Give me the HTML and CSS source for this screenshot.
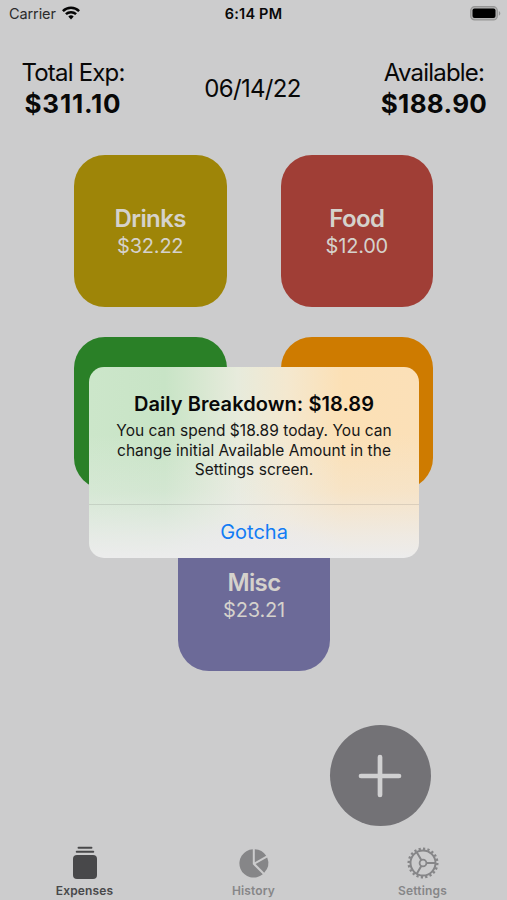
FILE: index.html
```html
<!DOCTYPE html>
<html lang="en">
<head>
<meta charset="utf-8">
<title>Expenses</title>
<link rel="stylesheet" href="styles.css">
</head>
<body>
<div class="screen">
  <header class="status">
    <div class="carrier"><span>Carrier</span>
      <svg class="wifi" width="18" height="14" viewBox="0 0 18 14" fill="none" stroke="#050505" stroke-width="2.5"><path d="M.9 5.1a11.6 11.6 0 0 1 16.2 0M3.9 8.2a7.4 7.4 0 0 1 10.2 0"/><path d="M9 13.4 6.3 10.6a4 4 0 0 1 5.4 0z" fill="#050505" stroke="none"/></svg>
    </div>
    <div class="time">6:14 PM</div>
    <svg class="battery" width="31" height="15" viewBox="0 0 31 15"><rect x=".7" y=".7" width="26.6" height="13.2" rx="4" fill="#b4b4b4" stroke="#959595" stroke-width="1.2"/><rect x="2.5" y="2.6" width="23" height="9.4" rx="2" fill="#000"/><path d="M28.8 5c2 .9 2 3.900 0 4.800z" fill="#959595"/></svg>
  </header>
  <section class="summary">
    <div class="total"><p class="label label-exp">Total Exp:</p><p class="amount amount-exp">$311.10</p></div>
    <div class="date">06/14/22</div>
    <div class="total"><p class="label label-avail">Available:</p><p class="amount">$188.90</p></div>
  </section>
  <main class="tiles">
    <div class="row">
      <div class="tile drinks"><h2>Drinks</h2><p>$32.22</p></div>
      <div class="tile food"><h2>Food</h2><p>$12.00</p></div>
    </div>
    <div class="row"><div class="tile green"></div><div class="tile orange"></div></div>
    <div class="row"><div class="tile misc"><h2>Misc</h2><p>$23.21</p></div></div>
  </main>
  <div class="actions">
    <button class="add" aria-label="Add expense"><svg width="44" height="44" viewBox="0 0 44 44" stroke="#d0d0d1" stroke-width="4.700" stroke-linecap="round"><path d="M22 3v38M3 22h38"/></svg></button>
  </div>
  <nav class="tabs">
    <div class="tab active">
      <svg width="34" height="34" viewBox="0 0 34 34" fill="currentColor"><rect x="5" y="9" width="24" height="24" rx="4"/><path d="M10.500 1.700h13M8.700 5.800h16.600" fill="none" stroke="currentColor" stroke-width="1.900" stroke-linecap="round"/></svg>
      <span>Expenses</span>
    </div>
    <div class="tab">
      <svg width="34" height="34" viewBox="0 0 34 34" fill="currentColor"><path d="M15.800 3.200V18.300L25.800 28.200A14.200 14.200 0 1 1 15.800 3.200z"/><path d="M17.800 3.200a14.200 14.200 0 0 1 11.400 6.600L17.800 16.200z"/><path d="M30.200 11.600a14.200 14.200 0 0 1-3 15.200L18.600 18z"/></svg>
      <span>History</span>
    </div>
    <div class="tab">
      <svg width="34" height="34" viewBox="0 0 34 34" fill="none" stroke="currentColor"><circle cx="17" cy="17" r="12.500" stroke-width="2"/><circle cx="17" cy="17" r="14.300" stroke-width="2.400" pathLength="80" stroke-dasharray="2 2"/><circle cx="17" cy="17" r="3.400" stroke-width="1.800"/><path d="M20.400 17h9.100M15.300 14.050 10.750 6.200M15.300 19.950 10.750 27.800" stroke-width="2"/></svg>
      <span>Settings</span>
    </div>
  </nav>
  <div class="alert" role="alertdialog">
    <div class="message">
      <h1>Daily Breakdown: $18.89</h1>
      <p><span class="line">You can spend $18.89 today. You can</span> <span class="line">change initial Available Amount in the</span> <span class="line">Settings screen.</span></p>
    </div>
    <button class="confirm">Gotcha</button>
  </div>
</div>
</body>
</html>
```

FILE: styles.css
```css
* { box-sizing: border-box; }
body { margin: 0; background: #cccccd; font-family: Inter, "Liberation Sans", sans-serif; color: #080808; }
h1, h2, p { margin: 0; }
button { border: 0; padding: 0; font: inherit; }
.screen { position: relative; width: 507px; height: 900px; overflow: hidden; display: flex; flex-direction: column; }
.status { height: 28px; display: grid; grid-template-columns: 1fr auto 1fr; align-items: center; padding: 0 6px 2px 9px; }
.carrier { display: flex; align-items: center; gap: 6px; font-size: 14.5px; letter-spacing: -.1px; color: #2b2b2b; }
.wifi { margin-top: -1px; }
.time { font-size: 14.5px; font-weight: 600; letter-spacing: .2px; margin-left: -3px; }
.battery { justify-self: end; margin-top: 1px; }
.summary { height: 126px; padding: 29px 19px 0 20px; display: grid; grid-template-columns: 106px 1fr 108px; text-align: center; white-space: nowrap; }
.label { font-size: 24px; line-height: 31px; letter-spacing: -.8px; }
.amount { font-size: 26px; line-height: 31px; font-weight: 700; letter-spacing: .3px; }
.amount-exp { letter-spacing: .8px; }
.date { font-size: 24px; line-height: 63px; letter-spacing: -.7px; margin-left: -1px; }
.tiles { display: flex; flex-direction: column; gap: 29.5px; padding-top: .5px; }
.row { display: flex; justify-content: center; gap: 54px; }
.tile { width: 152.600px; height: 152.600px; border-radius: 31px; padding-top: 49px; text-align: center; color: #d5d2cc; }
.tile h2 { font-size: 24px; line-height: 30px; font-weight: 600; letter-spacing: -.6px; }
.tile p { font-size: 20px; line-height: 25px; letter-spacing: -.2px; }
.drinks { background: #9e8508; }
.food { background: #a03e36; }
.green { background: #2a8027; }
.orange { background: #ce7b00; }
.misc { background: #6c6a98; margin-left: 1px; }
.actions { display: flex; justify-content: flex-end; padding: 53.600px 76px 0 0; }
.add { width: 101.500px; height: 101.500px; border-radius: 50%; background: #737276; display: flex; align-items: center; justify-content: center; }
.tabs { margin-top: auto; height: 54px; display: grid; grid-template-columns: repeat(3, 1fr); }
.tab { display: flex; flex-direction: column; align-items: center; color: #868688; font-size: 12px; font-weight: 600; line-height: 15px; letter-spacing: .15px; }
.tab span { margin-top: 3px; }
.tab.active { color: #48484a; }
.alert { position: absolute; left: 89px; top: 367px; width: 330px; height: 191px; border-radius: 15px; overflow: hidden; display: flex; flex-direction: column; text-align: center; white-space: nowrap;
  background: linear-gradient(180deg, transparent 35%, rgba(236,236,236,.3) 65%, rgba(236,236,236,.8) 88%, #ececec 100%), radial-gradient(ellipse 110px 50px at 50% 105%, #dcd9f0, transparent), linear-gradient(90deg, #cce6ca 0%, #c8e4c6 23%, #e7ebdc 45%, #f4e8cf 60%, #fce0b5 77%, #fbe0b8 100%); }
.message { height: 138px; padding-top: 25px; border-bottom: 1px solid rgba(70,70,70,.14); }
.message h1 { font-size: 20px; line-height: 25px; font-weight: 600; letter-spacing: .07px; }
.message p { font-size: 15.5px; line-height: 19.500px; padding-top: 4px; color: #161616; letter-spacing: .03px; }
.line { display: block; }
.confirm { flex: 1; background: none; color: #127cf5; font-size: 20px; line-height: 25px; padding-top: 2px; }
```
